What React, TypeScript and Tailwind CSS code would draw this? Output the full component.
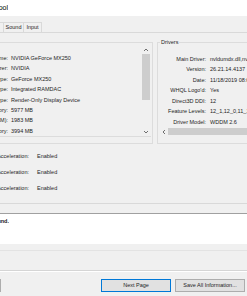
import React from "react";

/* ── Data ───────────────────────────────────────────────────────── */

const deviceRows: [string, string][] = [
  ["Name:", "NVIDIA GeForce MX250"],
  ["Manufacturer:", "NVIDIA"],
  ["Chip Type:", "GeForce MX250"],
  ["DAC Type:", "Integrated RAMDAC"],
  ["Device Type:", "Render-Only Display Device"],
  ["Total Memory:", "5977 MB"],
  ["Display Memory (VRAM):", "1983 MB"],
  ["Shared Memory:", "3994 MB"],
];

const driverRows: [string, string][] = [
  ["Main Driver:", "nvldumdx.dll,nvldumdx.dll,nvldumdx.dll,nvldumdx.dll"],
  ["Version:", "26.21.14.4137"],
  ["Date:", "11/18/2019 08:00:00"],
  ["WHQL Logo'd:", "Yes"],
  ["Direct3D DDI:", "12"],
  ["Feature Levels:", "12_1,12_0,11_1,11_0,10_1,10_0,9_3,9_2,9_1"],
  ["Driver Model:", "WDDM 2.6"],
];

const features = ["DirectDraw Acceleration:", "Direct3D Acceleration:", "AGP Texture Acceleration:"];

/* ── Right-aligned text whose left part runs off the window ──────── */

const Clip = ({ text, className }: { text: string; className: string }) => (
  <div className={`flex shrink-0 justify-end overflow-hidden whitespace-nowrap ${className}`}>
    <span className="shrink-0">{text}</span>
  </div>
);

const Chevron = ({ dir }: { dir: "up" | "down" | "left" }) => {
  const pts = dir === "up" ? "1,4 3,2 5,4" : dir === "down" ? "1,2 3,4 5,2" : "4,1 2,3 4,5";
  return (
    <svg width="6" height="6" viewBox="0 0 6 6">
      <polyline points={pts} fill="none" stroke="#606060" strokeWidth="0.9" />
    </svg>
  );
};

/* ── Component ──────────────────────────────────────────────────── */

const App = (): JSX.Element => {
  return (
    <div className="flex h-[296px] w-[247px] flex-col overflow-hidden bg-[#f0f0f0] font-['Liberation_Sans',Arial,sans-serif] text-[5.5px] text-[#1e1e1e]">
      {/* ── Title bar ──── */}
      <div className="flex h-[16px] shrink-0 items-center bg-white">
        <Clip text="DirectX Diagnostic Tool" className="w-[8px] text-[7px] text-black" />
      </div>

      {/* ── Tabs ──── */}
      <div className="flex h-[16px] shrink-0 items-end">
        <div className="h-[10px] w-[4px] border-r border-t border-[#d9d9d9]" />
        <div className="flex h-[10px] w-[20px] items-center justify-center border-r border-t border-[#d9d9d9]">Sound</div>
        <div className="flex h-[10px] w-[18px] items-center justify-center border-r border-t border-[#d9d9d9]">Input</div>
      </div>

      {/* ── Tab page ──── */}
      <div className="flex h-[172px] shrink-0 flex-col border-y border-[#d9d9d9]">
        <div className="mt-[9px] flex h-[102px] shrink-0">
          {/* Device group */}
          <div className="flex w-[153px] shrink-0 flex-col border-y border-r border-[#dcdcdc]">
            <div className="mt-[2px] flex h-[92px] w-[151px] border-b border-[#dcdcdc]">
              <div className="flex flex-1 flex-col pt-[8px]">
                {deviceRows.map(([label, value]) => (
                  <div key={label} className="flex h-[10.6px] items-center gap-[3px] whitespace-nowrap">
                    <Clip text={label} className="w-[8px]" />
                    <span>{value}</span>
                  </div>
                ))}
              </div>
              <div className="flex w-[10px] flex-col items-center bg-[#f0f0f0]">
                <div className="flex h-[9px] items-center">
                  <Chevron dir="up" />
                </div>
                <div className="h-[46px] w-[8px] bg-[#cdcdcd]" />
                <div className="flex-1" />
                <div className="flex h-[9px] items-center">
                  <Chevron dir="down" />
                </div>
              </div>
            </div>
          </div>

          <div className="w-[4px] shrink-0" />

          {/* Drivers group */}
          <div className="relative flex min-w-0 flex-1 flex-col border-y border-l border-[#dcdcdc]">
            <span className="absolute left-[2px] top-[-4px] bg-[#f0f0f0] px-[1px] leading-[7px]">Drivers</span>
            <div className="flex flex-col overflow-hidden pt-[10.5px]">
              {driverRows.map(([label, value]) => (
                <div key={label} className="flex h-[10.5px] items-center gap-[4px] whitespace-nowrap">
                  <span className="w-[48px] shrink-0 text-right">{label}</span>
                  <span>{value}</span>
                </div>
              ))}
            </div>
            <div className="ml-px flex h-[9px] items-center bg-[#f0f0f0]">
              <div className="flex w-[9px] justify-center">
                <Chevron dir="left" />
              </div>
              <div className="h-[7px] flex-1 bg-[#cdcdcd]" />
            </div>
          </div>
        </div>

        {/* Features */}
        <div className="mt-[4px] flex flex-col">
          {features.map((label) => (
            <div key={label} className="flex h-[16px] items-center gap-[8px] whitespace-nowrap">
              <Clip text={label} className="w-[29px]" />
              <span>Enabled</span>
            </div>
          ))}
        </div>
      </div>

      {/* ── Notes ──── */}
      <div className="h-[9px] shrink-0" />
      <div className="flex h-[31px] shrink-0 items-start border-t border-[#a0a0a0] bg-white pt-[3px]">
        <Clip text="No problems found." className="w-[9px] font-bold" />
      </div>
      <div className="h-[6px] shrink-0" />
      <div className="h-[20px] shrink-0 border-t border-[#e3e3e3]" />
      <div className="h-[2px] shrink-0 border-t border-[#d5d5d5] bg-white" />

      {/* ── Buttons ──── */}
      <div className="flex shrink-0 pt-[7px]">
        <div className="h-[13px] w-[1px] border-r border-[#adadad] bg-[#e1e1e1]" />
        <button className="ml-[100px] flex h-[13px] w-[70px] items-center justify-center border border-[#0078d7] bg-[#e1e1e1]">
          Next Page
        </button>
        <button className="ml-[4px] flex h-[13px] w-[70px] items-center justify-center border border-[#adadad] bg-[#e1e1e1]">
          Save All Information...
        </button>
      </div>
    </div>
  );
};

export default App;
